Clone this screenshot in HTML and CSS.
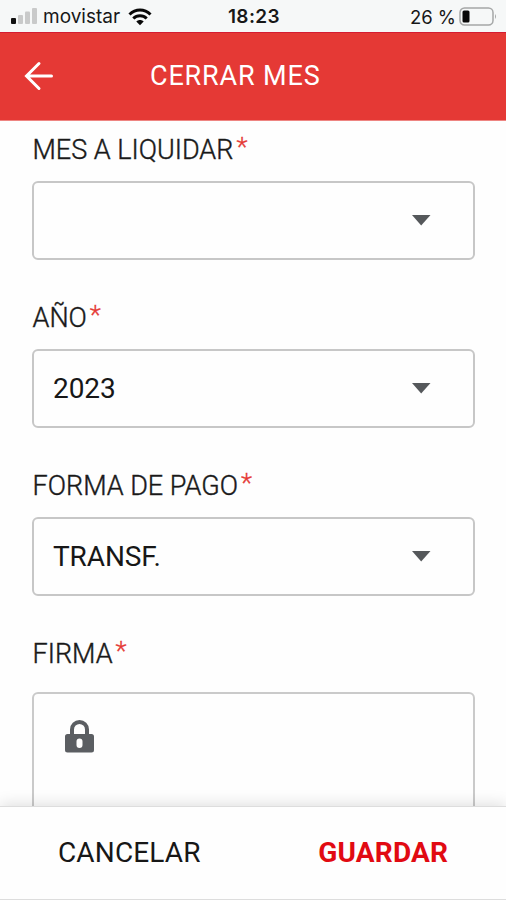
FILE: index.html
```html
<!DOCTYPE html>
<html lang="es">
<head>
<meta charset="utf-8">
<title>Cerrar mes</title>
<link rel="stylesheet" href="styles.css">
</head>
<body>
<div class="screen">
  <div class="status">
    <div class="carrier">
      <svg class="signal" width="28" height="18" viewBox="0 0 28 18"><rect x="1" y="11" width="5" height="6" rx="1" fill="#111"/><rect x="8" y="8" width="5" height="9" rx="1" fill="#c9caca"/><rect x="15" y="4.500" width="5" height="12.500" rx="1" fill="#c9caca"/><rect x="22" y="1" width="5" height="16" rx="1" fill="#c9caca"/></svg>
      <span class="carrier-name">movistar</span>
      <svg class="wifi" width="24" height="18" viewBox="0 0 24 18" fill="none" stroke="#080808" stroke-width="3"><path d="M1.500 6.500C7.500.500 16.500.500 22.500 6.500M5.300 10.500C9 6.800 15 6.800 18.700 10.500"/><path d="M8.300 13.500C10.400 11.500 13.600 11.500 15.700 13.500L12 17.200Z" fill="#080808" stroke="none"/></svg>
    </div>
    <span class="clock">18:23</span>
    <div class="power">
      <span class="percent">26 %</span>
      <svg width="39" height="20" viewBox="0 0 39 20"><rect x="1" y="1" width="33" height="17" rx="4.500" fill="none" stroke="#a5a7a7" stroke-width="1.500"/><rect x="3.500" y="3.500" width="7" height="12" rx="1.500" fill="#080808"/><path d="M36 7v5q2-2.500 0-5" fill="#a5a7a7"/></svg>
    </div>
  </div>
  <header class="appbar">
    <svg class="back" width="30" height="30" viewBox="0 0 30 30" fill="none" stroke="#fff" stroke-width="3" stroke-linecap="round"><path d="M27.500 15H3M15 2.500L2.500 15L15 27.500"/></svg>
    <h1 class="title">CERRAR MES</h1>
  </header>
  <main class="form">
    <section class="field">
      <div class="label"><span class="label-text">MES A LIQUIDAR</span><span class="required">*</span></div>
      <div class="select"><span></span><svg width="20" height="11" viewBox="0 0 20 11"><path d="M1 0H19.500L10.200 10.500Z" fill="#55585b"/></svg></div>
    </section>
    <section class="field">
      <div class="label"><span class="label-text">AÑO</span><span class="required">*</span></div>
      <div class="select"><span class="value">2023</span><svg width="20" height="11" viewBox="0 0 20 11"><path d="M1 0H19.500L10.200 10.500Z" fill="#55585b"/></svg></div>
    </section>
    <section class="field">
      <div class="label"><span class="label-text">FORMA DE PAGO</span><span class="required">*</span></div>
      <div class="select"><span class="value">TRANSF.</span><svg width="20" height="11" viewBox="0 0 20 11"><path d="M1 0H19.500L10.200 10.500Z" fill="#55585b"/></svg></div>
    </section>
    <section class="field signature-field">
      <div class="label"><span class="label-text">FIRMA</span><span class="required">*</span></div>
      <div class="signature"><svg width="29" height="33" viewBox="0 0 29 33"><path d="M7 16V9.500a7.500 7.500 0 0 1 15 0V16" fill="none" stroke="#5b5e62" stroke-width="4"/><path fill-rule="evenodd" fill="#5b5e62" d="M2.500 14H26.500A2.500 2.500 0 0 1 29 16.500V30A2.500 2.500 0 0 1 26.500 32.500H2.500A2.500 2.500 0 0 1 0 30V16.500A2.500 2.500 0 0 1 2.500 14ZM14.500 18.500A3 3 0 0 0 11.500 21.500V25A3 3 0 0 0 17.500 25V21.500A3 3 0 0 0 14.500 18.500Z"/></svg></div>
    </section>
  </main>
  <footer class="actions">
    <span class="cancel">CANCELAR</span>
    <span class="save">GUARDAR</span>
  </footer>
</div>
</body>
</html>
```
FILE: styles.css
```css
* { box-sizing: border-box; }
body { margin: 0; background: #fefefe; font-family: Roboto, "Liberation Sans", sans-serif; color: #171717; }
.screen { display: flex; flex-direction: column; width: 506px; height: 900px; overflow: hidden; }
.status { display: grid; grid-template-columns: 1fr auto 1fr; align-items: center; flex: 0 0 32px; padding: 2px 8px 0 10px; background: #f6f8f8; font-family: Inter, "Liberation Sans", sans-serif; font-size: 19px; line-height: 28px; }
.carrier, .power { display: flex; align-items: center; }
.carrier-name { margin: 0 8px 0 5px; }
.signal { margin-top: -2px; }
.wifi { margin-top: -1px; }
.clock { font-weight: 600; letter-spacing: .4px; }
.power { justify-content: flex-end; gap: 3px; }
.percent { font-size: 18.5px; }
.appbar { display: flex; align-items: center; flex: 0 0 89px; padding: 0 24px 2px; background: #e53935; border-top: 1px solid #d51c32; border-bottom: 1px solid #ee8582; color: #fff; }
.title { margin: 0 0 0 96px; font-size: 27px; line-height: 32px; font-weight: 400; letter-spacing: .85px; }
.form { display: flex; flex-direction: column; flex: 1; min-height: 0; overflow: hidden; padding: 12px 31px 0 32px; }
.field { flex: 0 0 168px; }
.label { display: flex; height: 48px; padding-left: .5px; font-size: 27px; line-height: 34px; font-weight: 300; }
.label-text { -webkit-text-stroke: .4px #222; }
.required { margin-left: 3px; margin-top: -3px; color: #e53935; font-size: 26px; -webkit-text-stroke: .3px #e53935; }
.select { display: flex; align-items: center; justify-content: space-between; height: 79px; padding: 0 42px 0 19px; border: 2px solid #c7c7c7; border-radius: 6px; }
.value { font-size: 28px; line-height: 34px; letter-spacing: -.1px; }
.signature-field .label { height: 55px; }
.signature { height: 160px; padding: 26px 31px; border: 2px solid #cacaca; border-radius: 6px; }
.actions { position: relative; display: flex; flex: 0 0 94px; justify-content: space-between; align-items: center; padding: 0 58px; border-top: 1px solid #ddd; border-bottom: 1px solid #ddd; background: #fefefe; box-shadow: 0 -2px 14px #00000020; font-size: 28px; line-height: 34px; }
.cancel { letter-spacing: .15px; }
.save { color: #e10a12; font-weight: 700; letter-spacing: .15px; }
```
